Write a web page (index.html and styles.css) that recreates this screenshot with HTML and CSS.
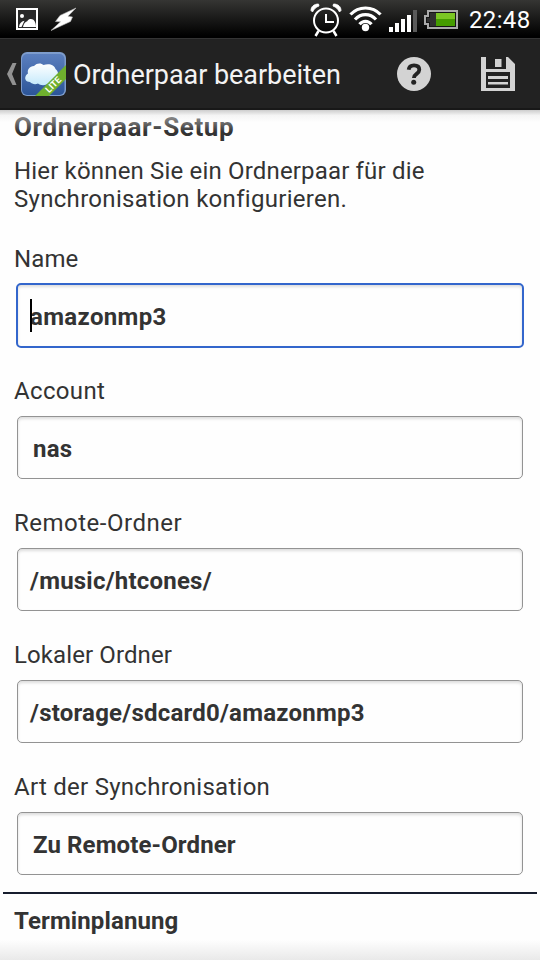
FILE: index.html
```html
<!DOCTYPE html>
<html lang="de">
<head>
<meta charset="utf-8">
<title>Ordnerpaar bearbeiten</title>
<link rel="stylesheet" href="styles.css">
</head>
<body>
<div class="status">
  <svg class="notifications" width="64" height="28" viewBox="14 6 64 28">
    <rect x="17" y="9" width="20" height="20" fill="#292929" stroke="#fff" stroke-width="2"/>
    <circle cx="22" cy="16" r="2" fill="#fff"/>
    <path d="M19 27c.2-3 2-5.600 5.500-6.200L21.500 27zM23 27c.5-3 2-5 4.200-5.800C28 19.500 29.500 19 31 19c3 0 5 3.500 5 8z" fill="#fff"/>
    <path d="M76 8L60 15.500l-4.500 6 5 .3L51 30.500 70.500 21.500l2-4.500-4.500-.8z" fill="#fff" stroke="#bbb" stroke-width=".6"/>
  </svg>
  <svg class="indicators" width="152" height="36" viewBox="308 2 152 36">
    <g fill="none" stroke="#fff" stroke-width="2">
      <circle cx="326" cy="20.500" r="12"/>
      <path d="M326 14v8h8"/>
      <path d="M318.500 31l-3 5M333.500 31l3 5" stroke-width="2.500"/>
    </g>
    <path d="M311 10.500c0-4 3-6.500 7.500-6.500l.5 2c-3 1-5 3-6.500 6zM341 10.500c0-4-3-6.500-7.500-6.500l-.5 2c3 1 5 3 6.500 6z" fill="#fff" stroke="#fff" stroke-width=".8"/>
    <g fill="none" stroke="#fff" stroke-width="3.200">
      <path d="M350.500 14.500c8-8.700 22-8.700 30 0"/>
      <path d="M355 19.500c6-6.500 15-6.500 21 0"/>
      <path d="M359.500 24.300c3.500-4 8.500-4 12 0"/>
    </g>
    <circle cx="365.500" cy="27.500" r="3.700" fill="#fff"/>
    <path d="M389 27h4v5h-4zM395 23h4v9h-4zM401 19h4v13h-4zM407 15h4v17h-4z" fill="#fff"/>
    <path d="M413 10h4v22h-4z" fill="#5a5a5a"/>
    <path d="M428 11h29v17h-29v-4h-3v-8h3z" fill="#151515" stroke="#aaa" stroke-width="2"/>
    <path d="M430 13h6v13h-6v-4h-3v-4h3z" fill="#303030"/>
    <rect x="436" y="13" width="19" height="7" fill="#7bc624"/>
    <rect x="436" y="19" width="19" height="7" fill="#459c00"/>
  </svg>
  <span class="clock">22:48</span>
</div>
<header class="bar">
  <svg class="back" width="66" height="50" viewBox="4 49 66 50">
    <defs>
      <linearGradient id="tile" x2="0" y2="1"><stop offset="0" stop-color="#5b7fbe"/><stop offset="1" stop-color="#2c5598"/></linearGradient>
      <linearGradient id="cloud" x2="0" y2="1"><stop offset="0" stop-color="#fff"/><stop offset="1" stop-color="#c4e9fb"/></linearGradient>
      <clipPath id="tileClip"><rect x="21" y="52" width="45" height="44" rx="6"/></clipPath>
    </defs>
    <path d="M12.500 63h4l-4.500 11 4.500 11h-4L7 74z" fill="#929292"/>
    <g clip-path="url(#tileClip)">
      <rect x="21" y="52" width="45" height="44" fill="#7d9ccc"/>
      <rect x="22" y="54" width="42.500" height="41" rx="5" fill="url(#tile)"/>
      <path d="M30 82c-4 0-5.500-3-4.500-5.500.5-1.500 1.500-2.500 2.500-3-1-4 1.500-7 6-7.500 3-3.500 7.500-3 9.500-1 5-2 11-.5 12 4 3 2 3.500 7 1 9.500-2 3-4.500 3-6.500 3-3 4.500-9 4.500-12 2-3 1.500-6 .5-8-1.500z" fill="url(#cloud)"/>
      <path d="M35 96L66 65v14L49 96z" fill="#6fb02e"/>
    </g>
    <text class="lite" transform="translate(49 93.300) rotate(-45)">LITE</text>
  </svg>
  <h1 class="title">Ordnerpaar bearbeiten</h1>
  <svg class="action" width="34" height="34" viewBox="0 0 34 34">
    <circle cx="17" cy="17" r="17" fill="#d3d3d3"/>
    <path d="M11.700 12.800C12 9.600 14 8.400 17 8.400c3.300 0 5.300 1.700 5.300 4.400 0 4.100-5.400 4-5.400 8.100" fill="none" stroke="#232323" stroke-width="3.800"/>
    <circle cx="16.700" cy="25.300" r="2.500" fill="#232323"/>
  </svg>
  <svg class="action save" width="34" height="34" viewBox="0 0 34 34">
    <path d="M0 0h5v12h20V0h2l7 7v27H0zM5 15v16h24V15z" fill="#d3d3d3" fill-rule="evenodd"/>
    <path d="M14 2h6.500v8H14zM7 19h20v3H7zM7 25h20v2.500H7z" fill="#d3d3d3"/>
  </svg>
</header>
<main class="form">
  <h2 class="heading setup">Ordnerpaar-Setup</h2>
  <p class="intro">Hier können Sie ein Ordnerpaar für die<br><span class="intro-end">Synchronisation konfigurieren.</span></p>
  <div class="group"><div class="label name">Name</div><div class="field focused"><span class="caret"></span><span class="v-name">amazonmp3</span></div></div>
  <div class="group"><div class="label account">Account</div><div class="field select"><span class="v-account">nas</span></div></div>
  <div class="group"><div class="label remote">Remote-Ordner</div><div class="field"><span class="v-remote">/music/htcones/</span></div></div>
  <div class="group"><div class="label local">Lokaler Ordner</div><div class="field"><span class="v-local">/storage/sdcard0/amazonmp3</span></div></div>
  <div class="group"><div class="label type">Art der Synchronisation</div><div class="field select"><span class="v-type">Zu Remote-Ordner</span></div></div>
  <hr class="rule">
  <h2 class="heading schedule">Terminplanung</h2>
</main>
</body>
</html>
```
FILE: styles.css
```css
* { box-sizing: border-box; }
body {
  margin: 0;
  width: 540px;
  height: 960px;
  overflow: hidden;
  background: #fefefe;
  color: #333;
  font: 24px/28px Roboto, sans-serif;
}
h1, h2, p { margin: 0; font-size: inherit; font-weight: inherit; }
svg { display: block; flex: none; }
.status {
  display: flex;
  height: 38px;
  background: linear-gradient(#353533, #000 36px);
}
.notifications { margin: 6px 0 0 14px; }
.indicators { margin: 2px 0 0 230px; }
.clock {
  margin: 6px 0 0 9px;
  color: #fff;
  font-size: 24px;
  letter-spacing: .35px;
}
.bar {
  display: flex;
  align-items: center;
  height: 72px;
  padding-left: 4px;
  background: #222;
  border-top: 1px solid #343434;
  border-bottom: 2px solid #181818;
}
.lite { fill: #fff; font: bold 9px Roboto, sans-serif; letter-spacing: .1px; }
.title {
  width: 324px;
  margin-left: 3px;
  padding-top: 2px;
  color: #f3f3f3;
  font-size: 27px;
  line-height: 32px;
  letter-spacing: -.05px;
  white-space: nowrap;
}
.save { margin-left: 50px; }
.form {
  position: relative;
  height: 850px;
  padding-top: 3px;
}
.form::before, .form::after {
  content: "";
  position: absolute;
  left: 0;
  width: 100%;
  pointer-events: none;
}
.form::before {
  top: 0;
  height: 22px;
  background: linear-gradient(rgba(205, 205, 205, 1), rgba(235, 235, 235, .5) 25%, rgba(254, 254, 254, .3) 55%, rgba(254, 254, 254, 0));
}
.form::after {
  bottom: 0;
  height: 20px;
  background: linear-gradient(rgba(230, 230, 230, 0), #e9e9e9);
}
.heading { padding-left: 14px; font-weight: bold; white-space: nowrap; }
.setup { font-size: 26px; letter-spacing: .63px; }
.schedule { letter-spacing: .12px; }
.intro { margin-top: 16px; padding-left: 14px; letter-spacing: .17px; white-space: nowrap; }
.intro-end { letter-spacing: .3px; }
.group { height: 132px; }
.intro + .group { margin-top: 32px; }
.label { padding-left: 14px; letter-spacing: .5px; }
.name { letter-spacing: .1px; }
.account { letter-spacing: .35px; }
.local { letter-spacing: .1px; }
.type { letter-spacing: .27px; }
.field {
  display: flex;
  align-items: center;
  height: 63px;
  margin: 11px 17px 0;
  padding: 3px 12px 0;
  border: 1px solid #939393;
  border-radius: 5px;
  box-shadow: inset 0 2px 3px #ddd;
  font-weight: bold;
  letter-spacing: .22px;
  white-space: nowrap;
}
.v-name { letter-spacing: .35px; }
.v-type { letter-spacing: .12px; }
.select { padding-left: 15px; }
.focused {
  height: 65px;
  margin: 10px 16px 0;
  border: 2px solid #3366cc;
  position: relative;
}
.caret {
  position: absolute;
  left: 12px;
  top: 14px;
  width: 2px;
  height: 33px;
  background: #000;
}
.rule {
  height: 2px;
  margin: -13px 3px 13px;
  border: 0;
  background: #171d2e;
}
```
